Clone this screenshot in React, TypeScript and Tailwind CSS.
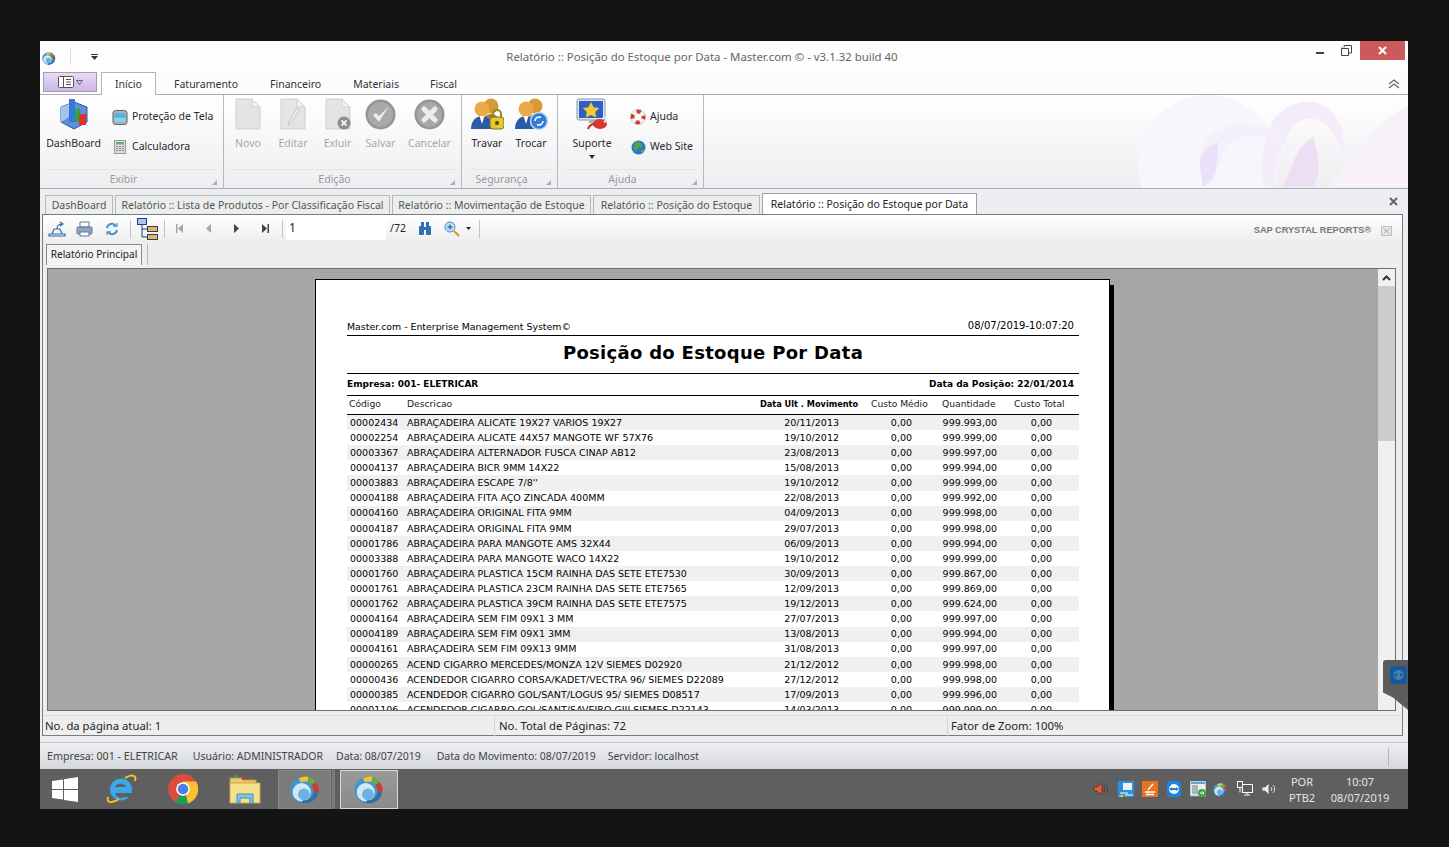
import React from "react";

const ui = "[font-family:'Noto_Sans',sans-serif]";

const rows = [
  ["00002434", "ABRAÇADEIRA ALICATE 19X27 VARIOS 19X27", "20/11/2013", "999.993,00"],
  ["00002254", "ABRAÇADEIRA ALICATE 44X57 MANGOTE WF 57X76", "19/10/2012", "999.999,00"],
  ["00003367", "ABRAÇADEIRA ALTERNADOR FUSCA  CINAP AB12", "23/08/2013", "999.997,00"],
  ["00004137", "ABRAÇADEIRA BICR 9MM 14X22", "15/08/2013", "999.994,00"],
  ["00003883", "ABRAÇADEIRA ESCAPE 7/8''", "19/10/2012", "999.999,00"],
  ["00004188", "ABRAÇADEIRA FITA AÇO ZINCADA 400MM", "22/08/2013", "999.992,00"],
  ["00004160", "ABRAÇADEIRA ORIGINAL FITA 9MM", "04/09/2013", "999.998,00"],
  ["00004187", "ABRAÇADEIRA ORIGINAL FITA 9MM", "29/07/2013", "999.998,00"],
  ["00001786", "ABRAÇADEIRA PARA MANGOTE AMS 32X44", "06/09/2013", "999.994,00"],
  ["00003388", "ABRAÇADEIRA PARA MANGOTE WACO 14X22", "19/10/2012", "999.999,00"],
  ["00001760", "ABRAÇADEIRA PLASTICA 15CM RAINHA DAS SETE ETE7530", "30/09/2013", "999.867,00"],
  ["00001761", "ABRAÇADEIRA PLASTICA 23CM RAINHA DAS SETE ETE7565", "12/09/2013", "999.869,00"],
  ["00001762", "ABRAÇADEIRA PLASTICA 39CM RAINHA DAS SETE ETE7575", "19/12/2013", "999.624,00"],
  ["00004164", "ABRAÇADEIRA SEM FIM 09X1 3 MM", "27/07/2013", "999.997,00"],
  ["00004189", "ABRAÇADEIRA SEM FIM 09X1 3MM", "13/08/2013", "999.994,00"],
  ["00004161", "ABRAÇADEIRA SEM FIM 09X13 9MM", "31/08/2013", "999.997,00"],
  ["00000265", "ACEND CIGARRO MERCEDES/MONZA 12V SIEMES D02920", "21/12/2012", "999.998,00"],
  ["00000436", "ACENDEDOR CIGARRO CORSA/KADET/VECTRA 96/ SIEMES D22089", "27/12/2012", "999.998,00"],
  ["00000385", "ACENDEDOR CIGARRO GOL/SANT/LOGUS 95/ SIEMES D08517", "17/09/2013", "999.996,00"],
  ["00001106", "ACENDEDOR CIGARRO GOL/SANT/SAVEIRO GIII SIEMES D22143", "14/03/2013", "999.999,00"],
];

function AppGlobe({ size = 14 }: { size?: number }) {
  return (
    <svg width={size} height={size} viewBox="0 0 28 28">
      <circle cx="13" cy="15" r="12.5" fill="#3f93cf" />
      <circle cx="11" cy="17" r="8.5" fill="#cfe8f6" />
      <circle cx="13" cy="19" r="5.5" fill="#6db2dc" />
      <path d="M8 4.5a12 12 0 0 1 9-2l-.5 5a7 7 0 0 0-6 .5z" fill="#efc52c" />
      <path d="M17 2.5a12 12 0 0 1 7 5l-4 3a8 8 0 0 0-3.5-3z" fill="#6aa84a" />
      <path d="M24 7.5a12 12 0 0 1 2.5 9.5l-4.500-.5a8 8 0 0 0-2-6z" fill="#d23a2e" />
      <path d="M26.500 17a12.500 12.500 0 0 1-15 10l.5-2.500a9 9 0 0 0 10-7.500z" fill="#2f6fa8" />
    </svg>
  );
}

function Dashboard() {
  return (
    <svg width="30" height="32" viewBox="0 0 30 32">
      <path d="M15 4 28 9v15l-13 7L2 24V9z" fill="#5c8fdc" stroke="#2a57a8" />
      <path d="M15 4v12L2 24V9z" fill="#a3c4f0" />
      <rect x="10" y="1" width="6" height="23" fill="#3777d6" />
      <rect x="16" y="11" width="5" height="13" fill="#2aa83c" />
      <rect x="20" y="16" width="7" height="11" fill="#e0322c" />
    </svg>
  );
}

function Monitor() {
  return (
    <svg width="17" height="17" viewBox="0 0 17 17">
      <rect x="1" y="1" width="15" height="15" rx="3" fill="#a9b2b8" stroke="#55616a" />
      <rect x="3" y="4" width="11" height="9" rx="1" fill="#4fb6e4" />
      <rect x="3" y="9" width="11" height="4" fill="#8cd6f2" />
    </svg>
  );
}

function Calculator() {
  return (
    <svg width="12" height="14" viewBox="0 0 12 14">
      <rect x=".5" y=".5" width="11" height="13" fill="#dcdcd6" stroke="#9b9b95" />
      <rect x="2" y="2" width="8" height="2.500" fill="#6fae7a" />
      <path d="M2 6h2v1H2zm3 0h2v1H5zm3 0h2v1H8zM2 8h2v1H2zm3 0h2v1H5zm3 0h2v1H8zM2 10h2v1H2zm3 0h2v1H5zm3 0h2v1H8z" fill="#8a8a8a" />
    </svg>
  );
}

function DocGrey({ children }: { children?: React.ReactNode }) {
  return (
    <svg width="26" height="32" viewBox="0 0 26 32">
      <path d="M1 1h16l8 8v22H1z" fill="#e4e4e4" stroke="#cfcfcf" />
      <path d="M17 1l8 8h-8z" fill="#f4f4f4" stroke="#cfcfcf" />
      {children}
    </svg>
  );
}

function CircleGrey({ kind }: { kind: "check" | "x" }) {
  return (
    <svg width="31" height="31" viewBox="0 0 31 31">
      <circle cx="15.5" cy="15.5" r="15" fill="#959595" />
      <circle cx="15.5" cy="15.500" r="12.5" fill="#a9a9a9" />
      {kind === "check" ? (
        <path d="M8 16l6 7L24 7l-10 10-3-3z" fill="#ececec" />
      ) : (
        <path d="M10 10l11 11M21 10 10 21" stroke="#ececec" strokeWidth="5" strokeLinecap="round" />
      )}
    </svg>
  );
}

function Users({ badge }: { badge: "lock" | "swap" }) {
  return (
    <svg width="34" height="32" viewBox="0 0 34 32">
      <circle cx="21" cy="8" r="7.500" fill="#d79a3a" />
      <path d="M11 30c0-9 5-14 10-14s10 4 10 14z" fill="#9c7a3a" />
      <circle cx="12" cy="11" r="7.500" fill="#eda945" />
      <path d="M1 31c0-8 5-13 11-13s11 5 11 13z" fill="#2c5aa6" />
      <path d="M9.500 18h5L12 26z" fill="#fff" />
      {badge === "lock" ? (
        <>
          <path d="M23 20v-4a4 4 0 0 1 8 0v4" fill="none" stroke="#8c8a2c" strokeWidth="2" />
          <rect x="20" y="19" width="14" height="12" rx="3" fill="#e6c72e" stroke="#7c7420" />
          <circle cx="27" cy="25" r="2" fill="#4a4410" />
        </>
      ) : (
        <>
          <circle cx="25" cy="23" r="8.500" fill="#2f7fd8" stroke="#c9d9ea" strokeWidth="1.500" />
          <path d="M21 23a4 4 0 0 1 6-3.500M29 23a4 4 0 0 1-6 3.500" fill="none" stroke="#fff" strokeWidth="1.500" />
        </>
      )}
    </svg>
  );
}

function Support() {
  return (
    <svg width="33" height="32" viewBox="0 0 33 32">
      <rect x="1" y="1" width="28" height="21" rx="2" fill="#dfe5ee" stroke="#8b96a8" />
      <rect x="3" y="3" width="24" height="17" fill="#2f5fc4" />
      <path d="M15 4l2.600 5.200 5.700.8-4.100 4 1 5.600-5.200-2.700-5.200 2.700 1-5.600-4.100-4 5.700-.8z" fill="#f4ce2e" />
      <path d="M13 22h6v3h-6z" fill="#aab2be" />
      <ellipse cx="24" cy="26" rx="7" ry="5" fill="#d9362c" />
      <path d="M12 31c1-3 4-5 7-5" stroke="#b52a22" strokeWidth="2" fill="none" />
      <path d="M26 21l5-3M28 24l4-2" stroke="#e8e8e8" strokeWidth="2" />
    </svg>
  );
}

function Lifebuoy() {
  return (
    <svg width="16" height="16" viewBox="0 0 16 16" fill="none">
      <circle cx="8" cy="8" r="5.500" stroke="#f5f0f0" strokeWidth="4" />
      <circle cx="8" cy="8" r="5.500" stroke="#d9362c" strokeWidth="4" strokeDasharray="4.320 4.320" strokeDashoffset="2.160" />
      <circle cx="8" cy="8" r="7.500" stroke="#b9b0b0" strokeWidth=".6" />
    </svg>
  );
}

function Earth() {
  return (
    <svg width="15" height="15" viewBox="0 0 15 15">
      <circle cx="7.500" cy="7.500" r="7" fill="#2f78c8" />
      <path d="M5 1.500c3 0 5 1 6 3s-1 3-3 3-3 2-2 4-3-2-3-4 0-5 2-6z" fill="#4fa83c" />
      <path d="M10 10l3 0-2 3z" fill="#6fc04c" />
    </svg>
  );
}

function BigItem({ icon, label, disabled, className = "" }: { icon: React.ReactNode; label: string; disabled?: boolean; className?: string }) {
  return (
    <div className={`flex flex-col items-center ${className}`}>
      <div className="h-[35px] flex items-end justify-center">{icon}</div>
      <span className={`mt-[5px] leading-[16px] whitespace-nowrap ${disabled ? "text-[#a8a8a8]" : "text-[#2a2a2a]"}`}>{label}</span>
    </div>
  );
}

function SmallItem({ icon, label }: { icon: React.ReactNode; label: string }) {
  return (
    <div className="h-[30px] flex items-center gap-[4px] text-[#2a2a2a] whitespace-nowrap">
      <div className="w-[16px] flex justify-center">{icon}</div>
      <span>{label}</span>
    </div>
  );
}

function Group({ label, width, children }: { label: string; width: number; children: React.ReactNode }) {
  return (
    <div className="h-full flex flex-col border-r border-[#b5b8bd] shrink-0" style={{ width }}>
      <div className="h-[74px] flex">{children}</div>
      <div className="mx-[6px] h-[19px] pr-[16px] pt-[2px] border-t border-[#e4e5e8] relative flex items-center justify-center text-[#9a9a9a]">
        {label}
        <span className="absolute right-[0px] bottom-[3px] w-0 h-0 border-l-[5px] border-l-transparent border-b-[5px] border-b-[#a9adb2]" />
      </div>
    </div>
  );
}

function Wisp() {
  return (
    <svg width="270" height="93" viewBox="0 0 270 93" fill="none">
      <circle cx="70" cy="70" r="70" fill="#f8f5fd" />
      <path d="M190 92c25-30 50-70 80-80v80z" fill="#f9f1fa" />
      <path d="M125 92c-5-40 5-80 40-85 30-3 45 25 40 55-5-25-20-42-38-38-18 5-32 40-30 68z" fill="#f5ecf9" />
      <path d="M70 92c-20-40 5-65 40-62 25 2 40 15 50 30-20-18-45-25-65-15-15 8-10 30-25 47z" fill="#f4f0fb" />
      <path d="M65 92c15-10 15-25 15-45-12 6-20 14-18 25z" fill="#e9e1f7" />
      <path d="M145 92c10-20 12-40 30-50 5 15 10 35 0 50z" fill="#ecdff3" />
    </svg>
  );
}

function DocTab({ label, active, width }: { label: string; active?: boolean; width: number }) {
  return active ? (
    <div className="h-[21px] pt-px bg-white border border-b-0 border-[#9aa0a6] flex items-center justify-center text-[#222] shrink-0 whitespace-nowrap" style={{ width }}>{label}</div>
  ) : (
    <div className="h-[19px] pt-px bg-[#eceded] border border-b-0 border-[#b5b8bd] flex items-center justify-center text-[#555] shrink-0 whitespace-nowrap" style={{ width }}>{label}</div>
  );
}

function Tri({ dir, bar }: { dir: "l" | "r"; bar?: boolean }) {
  return (
    <svg width="10" height="11" viewBox="0 0 10 11">
      {dir === "l" ? <path d="M8 1v9L3 5.500z" /> : <path d="M2 1v9l5-4.500z" />}
      {bar && (dir === "l" ? <rect x="1" y="1" width="1.500" height="9" /> : <rect x="7.500" y="1" width="1.500" height="9" />)}
    </svg>
  );
}

export default function App() {
  return (
    <div className={`w-[1449px] h-[847px] overflow-hidden bg-[#141414] pt-[41px] px-[40px] text-[10.5px] ${ui}`}>
      <div className="w-[1368px] h-[728px] flex flex-col bg-[#eceef1]">
        {/* title bar */}
        <div className="h-[31px] shrink-0 bg-[#fdfdfe] flex items-start relative">
          <div className="w-[19px] pl-[2px] pt-[10px]"><AppGlobe /></div>
          <div className="ml-[11px] mt-[8px] w-px h-[16px] bg-[#d9d9d9]" />
          <svg className="ml-[20px] mt-[13px]" width="7" height="6" viewBox="0 0 7 6"><path d="M0 0h7v1H0zM0 2h7L3.500 6z" fill="#333" /></svg>
          <div className="flex-1 text-center text-[#666] text-[11.4px] pt-[7px] pr-[10px] leading-[17px]">Relatório :: Posição do Estoque por Data - Master.com © - v3.1.32 build 40</div>
          <div className="flex items-start">
            <div className="mt-[11px] mr-[17px] w-[8px] h-[2px] bg-[#444]" />
            <svg className="mt-[4px] mr-[8px]" width="11" height="11" viewBox="0 0 11 11" fill="none" stroke="#444"><path d="M.5 3.500h7v7h-7zM.5 3.500V2.500M3 2.500V.5h7.500V8H8" strokeWidth="1" /></svg>
            <div className="w-[45px] h-[19px] mr-[3px] bg-[#cd5a5a] flex items-center justify-center">
              <svg width="9" height="9" viewBox="0 0 9 9"><path d="M1 1l7 7M8 1 1 8" stroke="#fff" strokeWidth="2" /></svg>
            </div>
          </div>
        </div>

        {/* ribbon tabs */}
        <div className="h-[22px] shrink-0 bg-[#fcfcfd] flex items-end relative text-[#333]">
          <div className="ml-[3px] mb-[2px] w-[54px] h-[20px] border border-[#a3a0ad] bg-gradient-to-b from-[#e9dcf6] to-[#cbb5e6] flex items-center justify-center gap-[2px]">
            <svg width="16" height="12" viewBox="0 0 16 12" fill="#fff" stroke="#555"><rect x=".5" y=".5" width="15" height="11" rx="1" /><path d="M5.500 1v10M8 3.500h5M8 6h5M8 8.500h5" /></svg>
            <svg width="7" height="5" viewBox="0 0 7 5" fill="none" stroke="#666"><path d="M.5.5h6L3.500 4.500z" /></svg>
          </div>
          <div className="ml-[4px] w-[55px] h-[23px] pt-px bg-white border border-b-0 border-[#b0b3b8] flex items-center justify-center -mb-px z-10">Início</div>
          <div className="ml-[18px] leading-[20px]">Faturamento</div>
          <div className="ml-[32px] leading-[20px]">Financeiro</div>
          <div className="ml-[32px] leading-[20px]">Materiais</div>
          <div className="ml-[31px] leading-[20px]">Fiscal</div>
          <svg className="absolute right-[8px] top-[7px]" width="12" height="10" viewBox="0 0 12 10" fill="none" stroke="#666" strokeWidth="1.300"><path d="M1 5l5-4 5 4M1 9l5-4 5 4" /></svg>
        </div>

        {/* ribbon */}
        <div className="h-[95px] shrink-0 border-y border-[#a9acb2] bg-gradient-to-b from-white to-[#eeeef1] flex">
          <Group label="Exibir" width={184}>
            <BigItem className="ml-[7px] w-[53px]" icon={<Dashboard />} label="DashBoard" />
            <div className="ml-[12px] pt-[7px]">
              <SmallItem icon={<Monitor />} label="Proteção de Tela" />
              <SmallItem icon={<Calculator />} label="Calculadora" />
            </div>
          </Group>
          <Group label="Edição" width={238}>
            <BigItem disabled className="ml-[11px] w-[26px]" icon={<DocGrey />} label="Novo" />
            <BigItem disabled className="ml-[18px] w-[28px]" icon={<DocGrey><path d="M17 10 9 24l-1 3 3-2 8-13z" fill="#f2f2f2" stroke="#c4c4c4" /></DocGrey>} label="Editar" />
            <BigItem disabled className="ml-[17px] w-[27px]" icon={<DocGrey><circle cx="19" cy="25" r="6.500" fill="#8c8c8c" /><path d="M16.500 22.500l5 5m0-5-5 5" stroke="#eee" strokeWidth="2" /></DocGrey>} label="Exluir" />
            <BigItem disabled className="ml-[14px] w-[31px]" icon={<CircleGrey kind="check" />} label="Salvar" />
            <BigItem disabled className="ml-[18px] w-[31px]" icon={<CircleGrey kind="x" />} label="Cancelar" />
          </Group>
          <Group label="Segurança" width={96}>
            <BigItem className="ml-[8px] w-[34px]" icon={<Users badge="lock" />} label="Travar" />
            <BigItem className="ml-[10px] w-[34px]" icon={<Users badge="swap" />} label="Trocar" />
          </Group>
          <Group label="Ajuda" width={146}>
            <div className="ml-[15px] w-[38px] flex flex-col items-center">
              <div className="h-[35px] flex items-end"><Support /></div>
              <span className="mt-[5px] leading-[16px] text-[#2a2a2a]">Suporte</span>
              <svg className="mt-[4px]" width="6" height="4" viewBox="0 0 6 4"><path d="M0 0h6L3 4z" fill="#333" /></svg>
            </div>
            <div className="ml-[19px] pt-[7px]">
              <SmallItem icon={<Lifebuoy />} label="Ajuda" />
              <SmallItem icon={<Earth />} label="Web Site" />
            </div>
          </Group>
          <div className="flex-1 flex justify-end overflow-hidden"><Wisp /></div>
        </div>

        {/* document tabs */}
        <div className="h-[25px] shrink-0 flex items-end pl-[5px] gap-[2px] relative">
          <DocTab label="DashBoard" width={68} />
          <DocTab label="Relatório :: Lista de Produtos - Por Classificação Fiscal" width={275} />
          <DocTab label="Relatório :: Movimentação de Estoque" width={199} />
          <DocTab label="Relatório :: Posição do Estoque" width={167} />
          <DocTab active label="Relatório :: Posição do Estoque por Data" width={215} />
          <svg className="absolute right-[10px] top-[8px]" width="9" height="9" viewBox="0 0 9 9"><path d="M1 1l7 7M8 1 1 8" stroke="#666" strokeWidth="2" /></svg>
        </div>

        {/* report pane */}
        <div className="h-[522px] shrink-0 ml-[2px] mr-[5px] border border-[#777b80] flex flex-col bg-[#eeeeee]">
          <div className="h-[27px] shrink-0 bg-gradient-to-b from-white to-[#eeeeee] flex items-center pl-[5px] relative">
            <svg width="18" height="16" viewBox="0 0 18 16" fill="none" stroke="#2c6fa8"><path d="M1 13h16v2H1zM4 13l2-5h6l2 5M9 8c0-4 2-5 5-5M12 1l3 2-3 2" strokeWidth="1.200" /></svg>
            <svg className="ml-[10px]" width="17" height="16" viewBox="0 0 17 16"><path d="M4 1h9v5H4z" fill="#fff" stroke="#5d7a99" /><rect x="1" y="6" width="15" height="7" rx="1" fill="#8fa6be" stroke="#5d7a99" /><rect x="4" y="11" width="9" height="4" fill="#fff" stroke="#5d7a99" /></svg>
            <svg className="ml-[12px]" width="14" height="14" viewBox="0 0 14 14" fill="none" stroke="#3b9ad6" strokeWidth="2"><path d="M2 6a5 5 0 0 1 9-2M12 8a5 5 0 0 1-9 2" /><path d="M8 4h4V1M6 10H2v3" strokeWidth="1.300" /></svg>
            <div className="ml-[11px] w-px h-[18px] bg-[#c4c4c4]" />
            <svg className="ml-[6px]" width="21" height="22" viewBox="0 0 21 22" fill="none" stroke="#1c3f78"><rect x=".5" y=".5" width="9" height="6" fill="#a9c6ea" /><rect x="10.500" y="8.500" width="10" height="5" fill="#f0b44c" /><rect x="10.500" y="16.500" width="10" height="5" fill="#f0b44c" /><path d="M5 7v12h5M5 11h5" /></svg>
            <div className="ml-[6px] w-px h-[18px] bg-[#c4c4c4]" />
            <div className="flex items-center fill-[#a6a6a6]">
              <div className="ml-[10px]"><Tri dir="l" bar /></div>
              <div className="ml-[18px]"><Tri dir="l" /></div>
              <div className="ml-[19px] fill-[#444]"><Tri dir="r" /></div>
              <div className="ml-[18px] fill-[#444]"><Tri dir="r" bar /></div>
            </div>
            <div className="ml-[12px] w-px h-[18px] bg-[#c4c4c4]" />
            <div className="ml-[3px] w-[100px] h-[23px] bg-white pl-[3px] text-[#222] leading-[22px] text-[12px]">1</div>
            <span className="ml-[4px] text-[#222]">/72</span>
            <svg className="ml-[12px]" width="14" height="13" viewBox="0 0 14 13" fill="#2f6fb8"><rect x="1" y="4" width="5" height="9" rx="1" /><rect x="8" y="4" width="5" height="9" rx="1" /><rect x="3" y="0" width="3" height="5" /><rect x="8" y="0" width="3" height="5" /><rect x="5" y="5" width="4" height="3" /></svg>
            <svg className="ml-[12px]" width="16" height="16" viewBox="0 0 16 16"><circle cx="6" cy="6" r="5" fill="#bfe0f5" stroke="#4a90c4" /><path d="M3.500 6h5M6 3.500v5" stroke="#2b6ea8" strokeWidth="1.400" /><path d="M10 10l5 5" stroke="#d99a3a" strokeWidth="2.400" /></svg>
            <svg className="ml-[6px]" width="5" height="3" viewBox="0 0 5 3"><path d="M0 0h5L2.500 3z" fill="#222" /></svg>
            <div className="ml-[8px] w-px h-[18px] bg-[#c4c4c4]" />
            <div className="ml-auto mr-[5px] pt-[5px] flex items-center">
              <span className="text-[9.2px] font-bold text-[#777] [font-family:'Liberation_Sans',sans-serif]">SAP CRYSTAL REPORTS®</span>
              <div className="ml-[10px] mr-[5px] w-[11px] h-[10px] border border-[#bbb] bg-[#e8e8e8] flex items-center justify-center">
                <svg width="7" height="6" viewBox="0 0 7 6"><path d="M.5.5l6 5m0-5-6 5" stroke="#aaa" /></svg>
              </div>
            </div>
          </div>
          <div className="h-[26px] shrink-0 flex items-start pt-[2px] pl-[3px]">
            <div className="h-[21px] w-[96px] border border-[#8a8a8a] border-b-0 bg-[#f4f4f4] flex items-center justify-center text-[10.1px] text-[#222] whitespace-nowrap">Relatório Principal</div>
            <div className="ml-[5px] w-px h-[21px] bg-[#b5b5b5]" />
          </div>

          {/* viewer */}
          <div className="h-[443px] shrink-0 ml-[4px] mr-[6px] border border-[#6e6e6e] flex overflow-hidden">
            <div className="flex-1 bg-[#a6a6a6] overflow-hidden pl-[267px] pt-[10px]">
              <div className="w-[799px] h-[500px] flex">
                <div className="w-[795px] h-[500px] bg-white border border-black pl-[31px] pr-[30px] pt-[40px] text-black [font-family:'DejaVu_Sans',sans-serif] text-[9.5px]">
                  <div className="h-[16px] border-b border-black flex justify-between items-end pb-[4px] pr-[5px] leading-none whitespace-nowrap">
                    <span className="text-[9.4px]">Master.com - Enterprise Management System©</span>
                    <span className="text-[10px]">08/07/2019-10:07:20</span>
                  </div>
                  <div className="h-[38px] pb-[4px] border-b border-black flex items-center justify-center text-[18px] font-bold text-black tracking-[0.3px]">Posição do Estoque Por Data</div>
                  <div className="h-[22px] pt-[1px] border-b border-black flex justify-between items-center font-bold text-[9px] text-black pr-[5px]">
                    <span>Empresa: 001- ELETRICAR</span>
                    <span>Data da Posição: 22/01/2014</span>
                  </div>
                  <div className="h-[19px] pb-[2px] border-b border-black flex items-center text-[9.2px] text-[#222] whitespace-nowrap">
                    <span className="w-[60px] pl-[2px]">Código</span>
                    <span className="w-[353px]">Descricao</span>
                    <span className="w-[111px] font-bold text-black text-[8.2px]">Data Ult . Movimento</span>
                    <span className="w-[71px]">Custo Médio</span>
                    <span className="w-[72px]">Quantidade</span>
                    <span>Custo Total</span>
                  </div>
                  <div>
                    {rows.map((r, i) => (
                      <div key={r[0]} className={`h-[15.11px] grid grid-cols-[60px_353px_79px_73px_85px_55px_27px] items-center leading-none whitespace-nowrap ${i % 2 === 0 ? "bg-[#f0f0f0]" : "bg-white"}`}>
                        <span className="pl-[3px]">{r[0]}</span>
                        <span>{r[1]}</span>
                        <span className="text-right">{r[2]}</span>
                        <span className="text-right">0,00</span>
                        <span className="text-right">{r[3]}</span>
                        <span className="text-right">0,00</span>
                        <span />
                      </div>
                    ))}
                  </div>
                </div>
                <div className="w-[4px] h-[494px] mt-[6px] bg-black" />
              </div>
            </div>
            <div className="w-[17px] shrink-0 bg-[#f0f0f0] flex flex-col">
              <div className="h-[17px] flex items-center justify-center">
                <svg width="9" height="6" viewBox="0 0 9 6" fill="none" stroke="#333" strokeWidth="2"><path d="M1 5l3.500-3.500L8 5" /></svg>
              </div>
              <div className="h-[155px] bg-[#cdcdcd]" />
            </div>
          </div>

          {/* viewer status */}
          <div className="flex-1 flex items-center mt-[4px] mb-[0px] border-t border-[#dcdcdc] text-[#222] text-[11.3px]">
            <div className="w-[451px] pl-[2px]">No. da página atual: 1</div>
            <div className="w-[453px] pl-[4px] border-l border-[#d5d5d5] leading-[20px]">No. Total de Páginas: 72</div>
            <div className="flex-1 pl-[3px] border-l border-[#d5d5d5] leading-[20px]">Fator de Zoom: 100%</div>
          </div>
        </div>

        {/* app status bar */}
        <div className="mt-[6px] flex-1 pt-[1px] border-t border-[#c8cad0] bg-gradient-to-b from-[#eceef1] to-[#d6d8dd] flex items-center pl-[7px] text-[#444] relative">
          <span className="text-[10.7px]">Empresa: 001 - ELETRICAR</span>
          <span className="ml-[15px]">Usuário: ADMINISTRADOR</span>
          <span className="ml-[13px]">Data: 08/07/2019</span>
          <span className="ml-[16px]">Data do Movimento: 08/07/2019</span>
          <span className="ml-[12px]">Servidor: localhost</span>
          <div className="ml-auto mr-[19px] w-px h-[18px] bg-[#b5b7bb]" />
        </div>
      </div>

      {/* taskbar */}
      <div className="w-[1368px] h-[40px] bg-[#5f5f5f] flex items-center text-[#e4e4e4] text-[11px]">
        <svg className="ml-[12px]" width="26" height="25" viewBox="0 0 26 25" fill="#fff"><path d="M0 4 11 2.500V12H0zM12 2.300 26 0v12H12zM0 13h11v9.500L0 21zM12 13h14v12l-14-2z" /></svg>
        <svg className="ml-[27px]" width="32" height="32" viewBox="0 0 32 32"><path d="M27 16a11 11 0 1 0-3 8h-5a6 6 0 0 1-9-4h17zM10 14a6 6 0 0 1 11 0z" fill="#39a9e8" fillRule="evenodd" /><path d="M3 24C1 31 8 30 14 26M30 8c2-6-3-7-10-3" fill="none" stroke="#efc22c" strokeWidth="2" /></svg>
        <svg className="ml-[31px]" width="30" height="30" viewBox="0 0 48 48"><circle cx="24" cy="24" r="24" fill="#dd4b3e" /><path d="M24 24 45 36A24 24 0 0 1 12 45z" fill="#1f9d55" /><path d="M24 12h21a24 24 0 0 1-13 35z" fill="#fbc02d" /><circle cx="24" cy="24" r="11" fill="#fff" /><circle cx="24" cy="24" r="8.500" fill="#4a7fe8" /></svg>
        <svg className="ml-[31px]" width="32" height="30" viewBox="0 0 32 30"><path d="M1 4h11l2 2h13v5H1z" fill="#e8c86a" stroke="#b99c48" /><path d="M1 9h30v20H1z" fill="#f6e08e" stroke="#c9ab55" /><path d="M8 29V20h16v9h-3v-5H11v5z" fill="#7fc6ea" stroke="#3f8fc0" /><rect x="5" y="1" width="3" height="3" fill="#3fa63f" /><rect x="13" y="3" width="3" height="3" fill="#d9362c" /></svg>
        <div className="ml-[17px] w-[53px] h-[39px] border border-[#888] bg-[#7b7b7b] flex items-center justify-center"><AppGlobe size={30} /></div>
        <div className="ml-[1px] w-[3px] h-[39px] bg-[#7b7b7b]" />
        <div className="ml-[5px] w-[58px] h-[39px] border border-[#d8d8d8] bg-gradient-to-b from-[#9a9a9a] to-[#8a8a8a] flex items-center justify-center"><AppGlobe size={30} /></div>

        <div className="ml-auto flex items-center">
          <svg width="16" height="16" viewBox="0 0 16 16"><path d="M1 6h3l5-4v12L4 10H1z" fill="#e0603a" stroke="#7a3018" /><path d="M11 5c1 2 1 4 0 6M13 3c2 3 2 7 0 10" fill="none" stroke="#5a3a30" /></svg>
          <svg className="ml-[9px]" width="16" height="16" viewBox="0 0 16 16"><rect width="16" height="16" fill="#2f8fd8" /><rect x="5" y="2" width="9" height="7" fill="#e8f3fb" /><path d="M2 12h8M7 14h8" stroke="#fff" /><path d="M0 16l5-3v3z" fill="#e6c72e" /></svg>
          <svg className="ml-[8px]" width="16" height="16" viewBox="0 0 16 16"><rect width="16" height="16" fill="#e8731c" /><path d="M3 11h10M4 13.500h8M6 9l5-6" stroke="#fff" strokeWidth="1.400" /></svg>
          <svg className="ml-[8px]" width="16" height="16" viewBox="0 0 16 16"><rect x="1" width="14" height="16" rx="3" fill="#1b84e0" /><circle cx="8" cy="8" r="5" fill="#fff" /><path d="M3 8l3-2v4zM13 8l-3-2v4z" fill="#1b84e0" /><rect x="6" y="7" width="4" height="2" fill="#1b84e0" /></svg>
          <svg className="ml-[8px]" width="16" height="16" viewBox="0 0 16 16"><rect width="16" height="15" fill="#e8eef2" stroke="#9ab" /><rect x="1" y="1" width="14" height="2" fill="#5fa8d8" /><rect x="2" y="4" width="6" height="9" fill="#a8b4ba" /><circle cx="12" cy="12" r="4" fill="#3fa63f" /><path d="M10 12h4M12.500 10.500 14 12l-1.500 1.500" stroke="#fff" fill="none" /></svg>
          <div className="ml-[7px] flex"><AppGlobe size={15} /></div>
          <svg className="ml-[9px]" width="16" height="16" viewBox="0 0 16 16" fill="none" stroke="#fff"><rect x="5.500" y="3.500" width="10" height="8" /><path d="M10 11.500v2M7 14h6" /><rect x=".5" y=".5" width="5" height="6" fill="#5f5f5f" /><path d="M3 6.500v5" /></svg>
          <svg className="ml-[8px]" width="16" height="16" viewBox="0 0 16 16"><path d="M1 6h3l4-4v12l-4-4H1z" fill="#eee" stroke="#666" /><path d="M10 6c1 1 1 3 0 4M12 4c2 2 2 6 0 8" fill="none" stroke="#ddd" /></svg>
          <div className="ml-[7px] w-[36px] text-center leading-[16px] mt-[1px]"><div>POR</div><div>PTB2</div></div>
          <div className="ml-[9px] mr-[17px] w-[62px] text-center leading-[16px] mt-[1px]"><div>10:07</div><div>08/07/2019</div></div>
        </div>
      </div>

      {/* TeamViewer panel docked on the window edge */}
      <div className="absolute left-[1383px] top-[660px] w-[25px] h-[50px] bg-[#5c5c5c] rounded-tl-[3px] [clip-path:polygon(0_0,100%_0,100%_100%,40%_75%,0_65%)] flex justify-end pr-[1px] pt-[6px]">
        <svg width="17" height="18" viewBox="0 0 17 18"><rect width="17" height="18" rx="3" fill="#135a9c" /><circle cx="8.500" cy="9" r="5" fill="#4a7ea8" /><path d="M4 9l3-2v4zM13 9l-3-2v4z" fill="#135a9c" /></svg>
      </div>
    </div>
  );
}
